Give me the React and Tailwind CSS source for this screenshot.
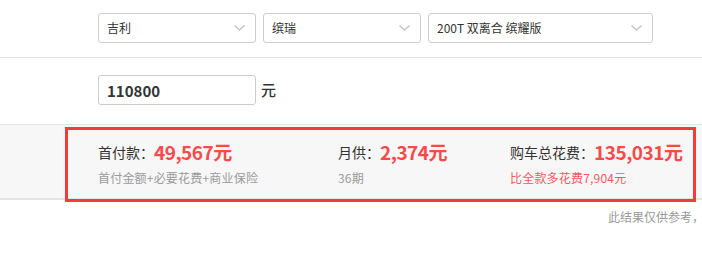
import React from "react";

const font = { fontFamily: '"Noto Sans CJK SC", "Noto Sans", sans-serif' };

function Chevron() {
  return (
    <svg width="11" height="6" viewBox="0 0 11 6" fill="none" className="shrink-0">
      <path d="M0.5 0.5 L5.5 5 L10.5 0.5" stroke="#bdbdbd" strokeWidth="1.1" />
    </svg>
  );
}

function Select({ w, text }) {
  return (
    <div
      className={`${w} h-[30px] border border-[#cccccc] rounded-[3px] bg-white flex items-center justify-between pl-[8px] pr-[10px] text-[12px] text-[#333]`}
    >
      <span>{text}</span>
      <Chevron />
    </div>
  );
}

function Stat({ w, label, value, sub, subColor }) {
  return (
    <div className={`${w} flex flex-col`}>
      <div className="h-[28px] flex items-center">
        <span className="text-[14px] text-[#333]">{label}</span>
        <span className="text-[19px] font-bold tracking-[-0.5px] text-[#f84a4a]">{value}</span>
      </div>
      <div className={`mt-[3px] text-[12px] leading-[18px] tracking-[0.2px] ${subColor}`}>{sub}</div>
    </div>
  );
}

export default function App() {
  return (
    <div className="w-[702px] h-[273px] bg-white overflow-hidden" style={font}>
      <div className="flex gap-[7px] pl-[98px] pt-[13px] pb-[14px] border-b border-[#e4e4e4]">
        <Select w="w-[158px]" text="吉利" />
        <Select w="w-[158px]" text="缤瑞" />
        <Select w="w-[225px]" text="200T 双离合 缤耀版" />
      </div>
      <div className="flex items-center gap-[5px] pl-[98px] pt-[17px] pb-[19px]">
        <div className="w-[158px] h-[30px] border border-[#cccccc] rounded-[3px] bg-white flex items-center pl-[8px] text-[15px] font-bold text-[#333] leading-none">
          110800
        </div>
        <span className="text-[15px] font-medium text-[#333]">元</span>
      </div>
      <div className="h-[76px] border-t border-b-2 border-[#e4e4e4] bg-[#f7f7f7] flex pl-[65px] pr-[6px]">
        <div className="mt-[2px] h-[75px] flex-1 border-[3px] border-[#f43b3b] flex pl-[30px] pt-[8px] shrink-0">
          <Stat w="w-[240px]" label="首付款：" value="49,567元" sub="首付金额+必要花费+商业保险" subColor="text-[#9a9a9a]" />
          <Stat w="w-[172px]" label="月供：" value="2,374元" sub="36期" subColor="text-[#9a9a9a]" />
          <Stat w="" label="购车总花费：" value="135,031元" sub="比全款多花费7,904元" subColor="text-[#f5595d]" />
        </div>
      </div>
      <div className="flex justify-end pt-[8px] mr-[-2px]">
        <span className="text-[12px] leading-[18px] text-[#9a9a9a] whitespace-nowrap">此结果仅供参考，</span>
      </div>
    </div>
  );
}
